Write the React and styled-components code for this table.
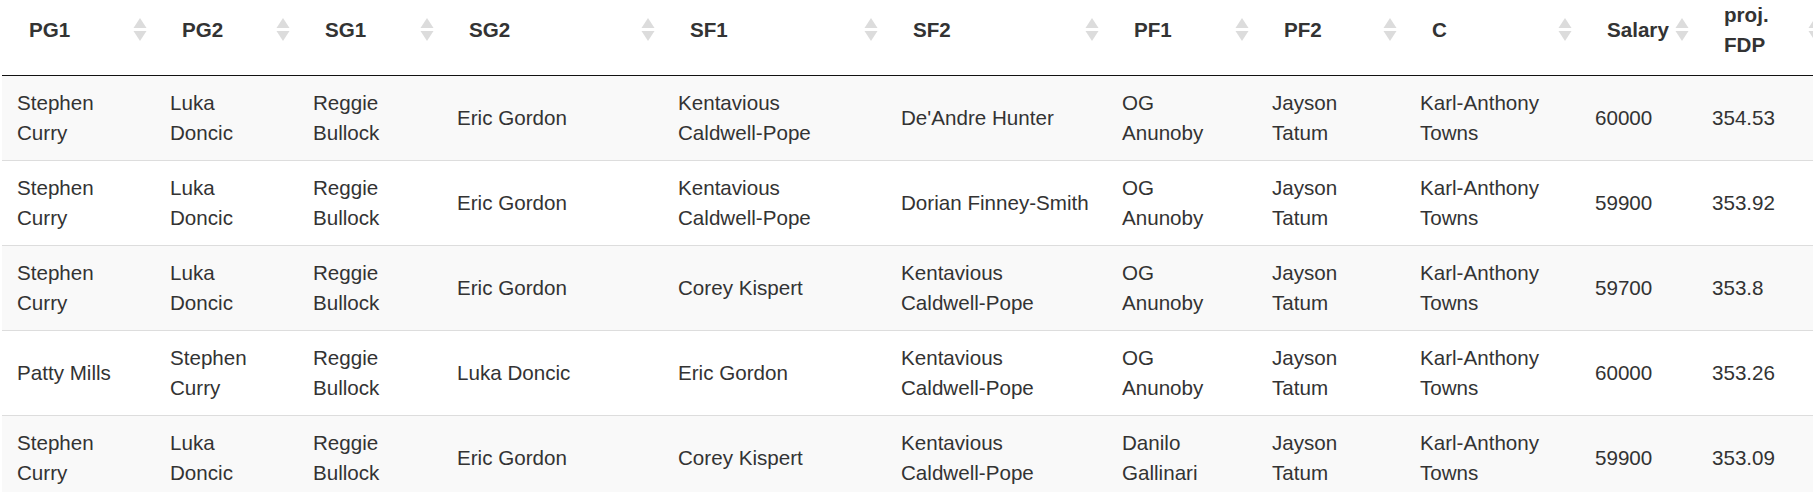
import React from 'react'
import styled, {createGlobalStyle} from 'styled-components'

const columns = [
  {title: 'PG1', width: 153},
  {title: 'PG2', width: 143},
  {title: 'SG1', width: 144},
  {title: 'SG2', width: 221},
  {title: 'SF1', width: 223},
  {title: 'SF2', width: 221},
  {title: 'PF1', width: 150, padRight: 24},
  {title: 'PF2', width: 148},
  {title: 'C', width: 175},
  {title: 'Salary', width: 117},
  {title: 'proj. FDP', width: 133},
]

const lineups = [
  ['Stephen Curry', 'Luka Doncic', 'Reggie Bullock', 'Eric Gordon', 'Kentavious Caldwell-Pope', "De'Andre Hunter", 'OG Anunoby', 'Jayson Tatum', 'Karl-Anthony Towns', '60000', '354.53'],
  ['Stephen Curry', 'Luka Doncic', 'Reggie Bullock', 'Eric Gordon', 'Kentavious Caldwell-Pope', 'Dorian Finney-Smith', 'OG Anunoby', 'Jayson Tatum', 'Karl-Anthony Towns', '59900', '353.92'],
  ['Stephen Curry', 'Luka Doncic', 'Reggie Bullock', 'Eric Gordon', 'Corey Kispert', 'Kentavious Caldwell-Pope', 'OG Anunoby', 'Jayson Tatum', 'Karl-Anthony Towns', '59700', '353.8'],
  ['Patty Mills', 'Stephen Curry', 'Reggie Bullock', 'Luka Doncic', 'Eric Gordon', 'Kentavious Caldwell-Pope', 'OG Anunoby', 'Jayson Tatum', 'Karl-Anthony Towns', '60000', '353.26'],
  ['Stephen Curry', 'Luka Doncic', 'Reggie Bullock', 'Eric Gordon', 'Corey Kispert', 'Kentavious Caldwell-Pope', 'Danilo Gallinari', 'Jayson Tatum', 'Karl-Anthony Towns', '59900', '353.09'],
]

function SortIcon() {
  return (
    <SortSvg width="14" height="26" viewBox="0 0 14 26">
      <polygon points="7,1 13.5,11 0.5,11" fill="#dcdcdc" />
      <polygon points="0.5,14 13.5,14 7,24" fill="#dcdcdc" />
    </SortSvg>
  )
}

function App() {
  return (
    <Wrapper>
      <GlobalStyle />
      <Table>
        <colgroup>
          {columns.map((col) => (
            <col key={col.title} style={{width: col.width}} />
          ))}
        </colgroup>
        <thead>
          <tr>
            {columns.map((col) => (
              <HeadCell key={col.title}>
                <HeadInner>
                  <Label>{col.title}</Label>
                  <SortIcon />
                </HeadInner>
              </HeadCell>
            ))}
          </tr>
        </thead>
        <tbody>
          {lineups.map((row, i) => (
            <Row key={i} $striped={i % 2 === 0}>
              {row.map((cell, j) => (
                <Cell key={j} $padRight={columns[j].padRight}>{cell}</Cell>
              ))}
            </Row>
          ))}
        </tbody>
      </Table>
    </Wrapper>
  )
}

const GlobalStyle = createGlobalStyle`
  html, body {
    margin: 0;
    padding: 0;
    overflow: hidden;
    background: #fff;
  }
`

const Wrapper = styled.div`
  width: 100vw;
  overflow: hidden;
  padding-left: 2px;
  box-sizing: border-box;
  font-family: "Liberation Sans", Arial, sans-serif;
  font-size: 20.6px;
  line-height: 30px;
  color: #333;
`

const Table = styled.table`
  table-layout: fixed;
  width: 1828px;
  border-collapse: separate;
  border-spacing: 0;
`

const HeadCell = styled.th`
  padding: 0 8px 15px 27px;
  text-align: left;
  vertical-align: middle;
  font-weight: bold;
  border-bottom: 1px solid #111;
`

const HeadInner = styled.div`
  display: flex;
  align-items: center;
  justify-content: space-between;
  gap: 4px;
`

const Label = styled.span`
  display: block;
`

const SortSvg = styled.svg`
  flex: none;
  display: block;
`

const Row = styled.tr`
  background: ${(p) => (p.$striped ? '#f9f9f9' : '#fff')};

  &:not(:first-child) td {
    border-top: 1px solid #ddd;
  }
`

const Cell = styled.td`
  padding: 12px ${(p) => p.$padRight || 17}px 12px 15px;
  vertical-align: middle;
  text-align: left;
`

export default App
